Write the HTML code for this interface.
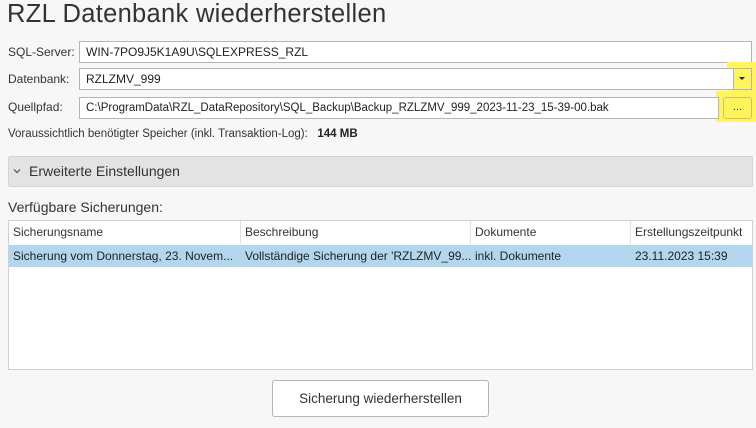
<!DOCTYPE html>
<html><head><meta charset="utf-8"><style>
*{box-sizing:border-box;margin:0;padding:0}
body{width:756px;height:428px;background:#f7f7f7;font-family:"Liberation Sans",sans-serif;color:#333;position:relative;overflow:hidden;font-size:12px}
.a{position:absolute;white-space:nowrap}
.box{position:absolute;background:#fff;border:1px solid #b5b5b5;padding-left:6px;line-height:20px;font-size:12px;color:#222}
.hl{position:absolute;background:#fff45a}
.col{position:absolute;top:0;height:23px;line-height:23px;padding-left:4px;font-size:12px;color:#333;border-right:1px solid #e0e0e0}
.cell{position:absolute;top:0;line-height:22px;padding-left:4px;font-size:12px;color:#222}
</style></head><body>
<div class="a" style="left:7px;top:0px;font-size:25.5px;letter-spacing:0.3px;color:#333">RZL Datenbank wiederherstellen</div>
<div class="a" style="left:8px;top:45px">SQL-Server:</div>
<div class="box" style="left:79px;top:41px;width:673px;height:22px">WIN-7PO9J5K1A9U\SQLEXPRESS_RZL</div>
<div class="a" style="left:8px;top:72px">Datenbank:</div>
<div class="hl" style="left:727px;top:62px;width:29px;height:30px"></div>
<div class="box" style="left:79px;top:68px;width:673px;height:22px">RZLZMV_999</div>
<div style="position:absolute;left:733px;top:69px;width:18px;height:20px;background:#fff45a;border-left:1px solid #b5b5b5"></div>
<div style="position:absolute;left:739px;top:77px;width:0;height:0;border-left:3px solid transparent;border-right:3px solid transparent;border-top:3px solid #222"></div>
<div class="a" style="left:8px;top:100px">Quellpfad:</div>
<div class="hl" style="left:716px;top:91px;width:40px;height:31px"></div>
<div class="box" style="left:79px;top:97px;width:640px;height:22px;font-size:11.5px">C:\ProgramData\RZL_DataRepository\SQL_Backup\Backup_RZLZMV_999_2023-11-23_15-39-00.bak</div>
<div style="position:absolute;left:723px;top:97px;width:29px;height:22px;border:1px solid #c9c26a;border-radius:3px;text-align:center;line-height:18px;font-size:11px">...</div>
<div class="a" style="left:8px;top:128px;font-size:11.5px">Voraussichtlich benötigter Speicher (inkl. Transaktion-Log):&nbsp;&nbsp;&nbsp;<b style="color:#222">144 MB</b></div>
<div style="position:absolute;left:8px;top:156px;width:745px;height:31px;background:#e3e3e3;border:1px solid #d5d5d5;border-radius:2px"></div>
<svg style="position:absolute;left:13px;top:168px" width="8" height="6"><path d="M1 1.5 L4 4.5 L7 1.5" fill="none" stroke="#555" stroke-width="1.2"/></svg>
<div class="a" style="left:29px;top:163px;font-size:14px;color:#333">Erweiterte Einstellungen</div>
<div class="a" style="left:8px;top:199px;font-size:14px;color:#333">Verfügbare Sicherungen:</div>
<div style="position:absolute;left:8px;top:220px;width:745px;height:150px;background:#fff;border:1px solid #d0d0d0">
 <div style="position:absolute;left:0;top:0;width:743px;height:24px">
  <div class="col" style="left:0;width:232px">Sicherungsname</div>
  <div class="col" style="left:232px;width:230px">Beschreibung</div>
  <div class="col" style="left:462px;width:160px">Dokumente</div>
  <div class="col" style="left:622px;width:121px;border:none">Erstellungszeitpunkt</div>
 </div>
 <div style="position:absolute;left:0;top:24px;width:743px;height:22px;background:#b3d6ef">
  <div class="cell" style="left:0">Sicherung vom Donnerstag, 23. Novem...</div>
  <div class="cell" style="left:232px">Vollständige Sicherung der 'RZLZMV_99...</div>
  <div class="cell" style="left:462px">inkl. Dokumente</div>
  <div class="cell" style="left:622px">23.11.2023 15:39</div>
 </div>
</div>
<div style="position:absolute;left:272px;top:380px;width:217px;height:37px;background:#fff;border:1px solid #b5b5b5;border-radius:3px;text-align:center;line-height:35px;font-size:13.5px;color:#333">Sicherung wiederherstellen</div>
</body></html>
